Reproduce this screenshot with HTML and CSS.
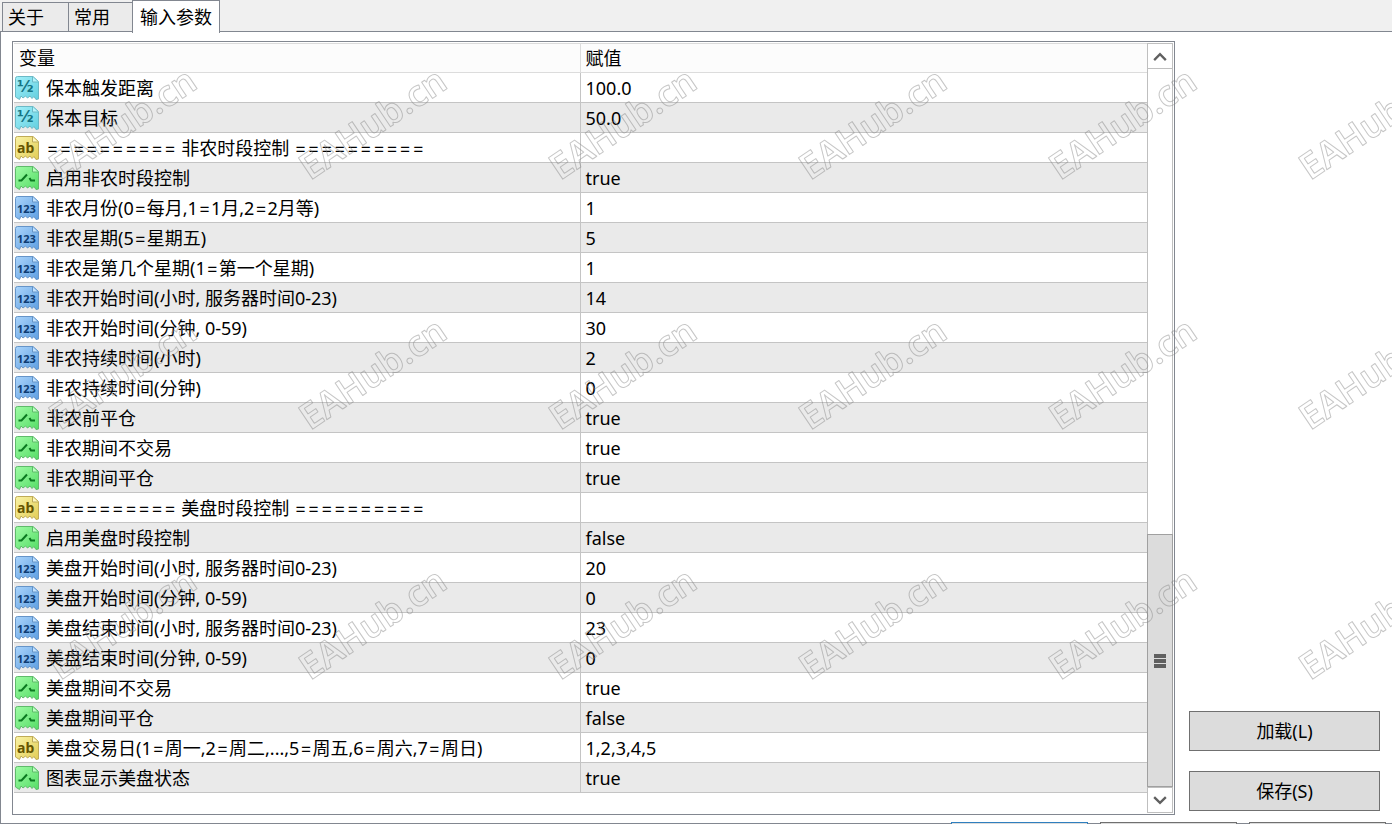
FILE: index.html
```html
<!DOCTYPE html>
<html lang="zh-CN">
<head>
<meta charset="utf-8">
<title>输入参数</title>
<link rel="stylesheet" href="styles.css">
</head>
<body>
<svg class="defs" aria-hidden="true">
  <defs>
    <linearGradient id="gCyan" x1="0" y1="0" x2="1" y2="1"><stop offset="0" stop-color="#a4f0fa"/><stop offset="1" stop-color="#62cfdf"/></linearGradient>
    <linearGradient id="gYellow" x1="0" y1="0" x2="1" y2="1"><stop offset="0" stop-color="#faf3a6"/><stop offset="1" stop-color="#e2cd55"/></linearGradient>
    <linearGradient id="gGreen" x1="0" y1="0" x2="1" y2="1"><stop offset="0" stop-color="#a0fca6"/><stop offset="1" stop-color="#55dd66"/></linearGradient>
    <linearGradient id="gBlue" x1="0" y1="0" x2="1" y2="1"><stop offset="0" stop-color="#aad4fb"/><stop offset="1" stop-color="#5f9fe2"/></linearGradient>
    <path id="sheet" d="M2.5.5H18L23.5 5.500V23L21 23.500L19 20.500L17 22.500L15 20L12.500 22L10.500 20L8 22L6 20L4.500 23.500L.5 21V2.500Q.5.5 2.500.5Z"/>
    <path id="fold" d="M17.500 1V6H23"/>
    <symbol id="i-real" viewBox="0 0 24 24"><use href="#sheet" fill="url(#gCyan)" stroke="#6bb9c6"/><use href="#fold" fill="#b9f3fa" stroke="#6bb9c6"/><text class="half" x="2" y="16" fill="#167584">½</text></symbol>
    <symbol id="i-text" viewBox="0 0 24 24"><use href="#sheet" fill="url(#gYellow)" stroke="#bfab58"/><use href="#fold" fill="#fdf8c4" stroke="#bfab58"/><text class="ab" x="2" y="17" fill="#665500">ab</text></symbol>
    <symbol id="i-bool" viewBox="0 0 24 24"><use href="#sheet" fill="url(#gGreen)" stroke="#5fba6b"/><use href="#fold" fill="#bffdc4" stroke="#5fba6b"/><path d="M3.500 14.500H6.500L12 8.500M14.500 12L16 14.500H20" fill="none" stroke="#0b7a20" stroke-width="2"/></symbol>
    <symbol id="i-int" viewBox="0 0 24 24"><use href="#sheet" fill="url(#gBlue)" stroke="#6594c8"/><use href="#fold" fill="#c4e1fc" stroke="#6594c8"/><text class="num" x="2" y="17" fill="#0d3c73">123</text></symbol>
    <pattern id="mark" width="250" height="250" patternUnits="userSpaceOnUse">
      <text class="mark-text" transform="translate(60 181) rotate(-34)">EAHub.cn</text>
    </pattern>
  </defs>
</svg>

<nav class="tabs">
  <button class="tab tab-about">关于</button>
  <button class="tab">常用</button>
  <button class="tab active">输入参数</button>
</nav>

<main class="panel">
  <section class="list">
    <table class="params">
      <thead><tr><th>变量</th><th>赋值</th></tr></thead>
      <tbody>
        <tr><td><div class="name"><svg><use href="#i-real"/></svg>保本触发距离</div></td><td>100.0</td></tr>
        <tr><td><div class="name"><svg><use href="#i-real"/></svg>保本目标</div></td><td>50.0</td></tr>
        <tr><td><div class="name"><svg><use href="#i-text"/></svg><span><span class="eq">==========</span> 非农时段控制 <span class="eq">==========</span></span></div></td><td></td></tr>
        <tr><td><div class="name"><svg><use href="#i-bool"/></svg>启用非农时段控制</div></td><td>true</td></tr>
        <tr><td><div class="name"><svg><use href="#i-int"/></svg><span>非农月份(0<span class="eq">=</span>每月,1<span class="eq">=</span>1月,2<span class="eq">=</span>2月等)</span></div></td><td>1</td></tr>
        <tr><td><div class="name"><svg><use href="#i-int"/></svg><span>非农星期(5<span class="eq">=</span>星期五)</span></div></td><td>5</td></tr>
        <tr><td><div class="name"><svg><use href="#i-int"/></svg><span>非农是第几个星期(1<span class="eq">=</span>第一个星期)</span></div></td><td>1</td></tr>
        <tr><td><div class="name"><svg><use href="#i-int"/></svg>非农开始时间(小时, 服务器时间0-23)</div></td><td>14</td></tr>
        <tr><td><div class="name"><svg><use href="#i-int"/></svg>非农开始时间(分钟, 0-59)</div></td><td>30</td></tr>
        <tr><td><div class="name"><svg><use href="#i-int"/></svg>非农持续时间(小时)</div></td><td>2</td></tr>
        <tr><td><div class="name"><svg><use href="#i-int"/></svg>非农持续时间(分钟)</div></td><td>0</td></tr>
        <tr><td><div class="name"><svg><use href="#i-bool"/></svg>非农前平仓</div></td><td>true</td></tr>
        <tr><td><div class="name"><svg><use href="#i-bool"/></svg>非农期间不交易</div></td><td>true</td></tr>
        <tr><td><div class="name"><svg><use href="#i-bool"/></svg>非农期间平仓</div></td><td>true</td></tr>
        <tr><td><div class="name"><svg><use href="#i-text"/></svg><span><span class="eq">==========</span> 美盘时段控制 <span class="eq">==========</span></span></div></td><td></td></tr>
        <tr><td><div class="name"><svg><use href="#i-bool"/></svg>启用美盘时段控制</div></td><td>false</td></tr>
        <tr><td><div class="name"><svg><use href="#i-int"/></svg>美盘开始时间(小时, 服务器时间0-23)</div></td><td>20</td></tr>
        <tr><td><div class="name"><svg><use href="#i-int"/></svg>美盘开始时间(分钟, 0-59)</div></td><td>0</td></tr>
        <tr><td><div class="name"><svg><use href="#i-int"/></svg>美盘结束时间(小时, 服务器时间0-23)</div></td><td>23</td></tr>
        <tr><td><div class="name"><svg><use href="#i-int"/></svg>美盘结束时间(分钟, 0-59)</div></td><td>0</td></tr>
        <tr><td><div class="name"><svg><use href="#i-bool"/></svg>美盘期间不交易</div></td><td>true</td></tr>
        <tr><td><div class="name"><svg><use href="#i-bool"/></svg>美盘期间平仓</div></td><td>false</td></tr>
        <tr><td><div class="name"><svg><use href="#i-text"/></svg><span>美盘交易日(1<span class="eq">=</span>周一,2<span class="eq">=</span>周二,...,5<span class="eq">=</span>周五,6<span class="eq">=</span>周六,7<span class="eq">=</span>周日)</span></div></td><td>1,2,3,4,5</td></tr>
        <tr><td><div class="name"><svg><use href="#i-bool"/></svg>图表显示美盘状态</div></td><td>true</td></tr>
      </tbody>
    </table>
    <div class="scrollbar">
      <button class="arrow" aria-label="向上滚动"><svg viewBox="0 0 12 12"><path d="M1 9.500L6 4.500L11 9.500"/></svg></button>
      <div class="track"><div class="thumb"><i></i><i></i><i></i></div></div>
      <button class="arrow" aria-label="向下滚动"><svg viewBox="0 0 12 12"><path d="M1 3.500L6 8.500L11 3.500"/></svg></button>
    </div>
  </section>
  <aside class="side">
    <button class="btn">加载(L)</button>
    <button class="btn">保存(S)</button>
  </aside>
</main>

<footer class="footer">
  <button class="foot-btn primary" aria-label="确定"></button>
  <button class="foot-btn" aria-label="取消"></button>
  <button class="foot-btn" aria-label="重设"></button>
</footer>

<svg class="watermark" aria-hidden="true"><rect width="100%" height="100%" fill="url(#mark)"/></svg>
</body>
</html>
```
FILE: styles.css
```css
* { box-sizing: border-box; }
body {
  display: flex;
  flex-direction: column;
  height: 100vh;
  margin: 0;
  overflow: hidden;
  background: #f0f0f0;
  color: #000;
  font: 18px/24px "Noto Sans", "Noto Sans CJK SC", sans-serif;
}
button { font: inherit; color: inherit; margin: 0; padding: 0; }
.defs { position: absolute; width: 0; height: 0; }

.tabs { display: flex; flex: none; align-items: flex-end; height: 31px; padding-left: 2px; }
.tab {
  height: 29px;
  padding: 0 22px 0 5px;
  border: 1px solid #828790;
  border-width: 1px 0 0 1px;
  background: #ebebeb;
  line-height: 26px;
}
.tab-about { padding-right: 24px; }
.tab.active {
  position: relative;
  height: 33px;
  margin-bottom: -2px;
  padding: 0 7px;
  border-width: 1px 1px 0;
  background: #fff;
  line-height: 28px;
}

.panel {
  display: flex;
  flex: none;
  gap: 14px;
  padding: 9px 12px 8px 11px;
  border: 1px solid #828790;
  border-right: 0;
  background: #fff;
}
.list {
  display: flex;
  flex: 1;
  min-width: 0;
  padding: 1px;
  border: 1px solid #828790;
}
.params {
  flex: 1;
  align-self: flex-start;
  margin-bottom: 20px;
  border-spacing: 0;
  table-layout: fixed;
  width: 100%;
}
.params th, .params td {
  height: 30px;
  padding: 0 0 0 5px;
  border-bottom: 1px solid #c4c4c4;
  text-align: left;
  font-weight: inherit;
  white-space: nowrap;
}
.params th { border-top: 1px solid #dcdcdc; border-bottom-color: #dcdcdc; background: #fcfcfc; }
.params th:first-child { border-right: 1px solid #dcdcdc; }
.params td:first-child { padding-left: 1px; border-right: 1px solid #c4c4c4; }
.params tbody tr:nth-child(even) { background: #eaeaea; }
.name { display: flex; align-items: center; gap: 7px; }
.name svg { flex: none; width: 24px; height: 24px; }
.eq { font-family: Inter, sans-serif; font-size: 20px; line-height: 20px; font-weight: 300; }
.half { font: bold 16px "DejaVu Sans", sans-serif; }
.ab { font: bold 14px "Noto Sans", sans-serif; }
.num { font: bold 11px "Noto Sans", sans-serif; }

.scrollbar { display: flex; flex-direction: column; flex: none; width: 26px; background: #fff; }
.arrow {
  flex: none;
  display: grid;
  place-items: center;
  height: 26px;
  border: 1px solid #bfbfbf;
  background: #fff;
}
.arrow svg { width: 14px; height: 14px; fill: none; stroke: #606060; stroke-width: 2; }
.track {
  display: flex;
  flex: 1;
  flex-direction: column;
  justify-content: flex-end;
  border: 1px solid #bfbfbf;
  border-width: 0 1px;
}
.thumb {
  display: flex;
  flex-direction: column;
  align-items: center;
  justify-content: center;
  gap: 1px;
  height: 35.2%;
  margin: 0 -1px;
  border: 1px solid #a0a0a0;
  background: #dcdcdc;
}
.thumb i { width: 12px; height: 4px; background: #606060; }

.side { display: flex; flex: none; flex-direction: column; justify-content: flex-end; gap: 20px; width: 191px; padding-bottom: 4px; }
.btn { height: 40px; border: 1px solid #707070; background: #dcdcdc; }

.footer {
  display: flex;
  flex: 1;
  align-items: flex-start;
  justify-content: flex-end;
  gap: 12px;
  min-height: 0;
  margin-top: -2px;
  padding-right: 6px;
  overflow: hidden;
  z-index: 1;
}
.foot-btn { width: 137px; height: 40px; border: 1px solid #707070; background: #dcdcdc; }
.foot-btn.primary { border-color: #2f7fbf; }

.watermark { position: absolute; inset: 0; width: 100%; height: 100%; pointer-events: none; }
.mark-text {
  font: 600 36px "Noto Sans", sans-serif;
  fill: none;
  stroke: #808080;
  stroke-opacity: 0.45;
  stroke-linejoin: round;
}
```
